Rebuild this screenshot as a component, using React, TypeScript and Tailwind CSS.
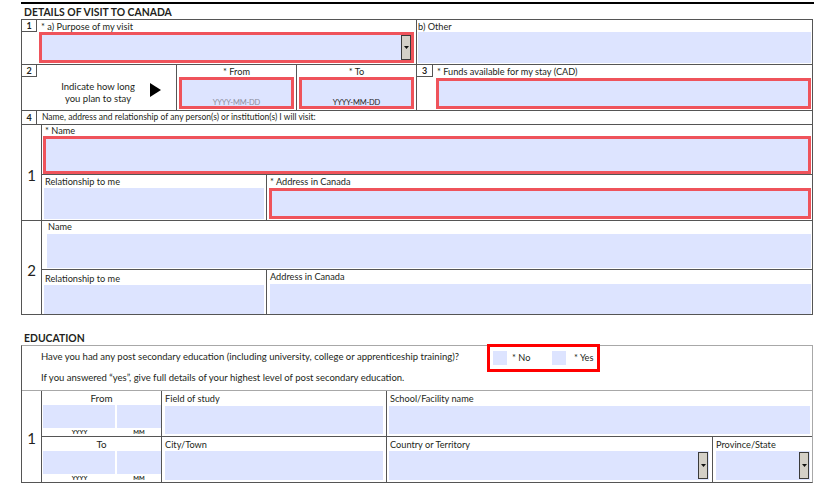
import React from 'react';

// PDF-style form fields
function Field({ red, className = '', children }: { red?: boolean; className?: string; children?: React.ReactNode }) {
  return (
    <div className={`bg-[#dde4ff] ${red ? 'border-[3px] border-[#ef535b]' : ''} ${className}`}>{children}</div>
  );
}

function DropButton() {
  return (
    <div className="w-[10px] h-full bg-[#d4d0c8] border border-[#3a3a3a] flex items-center justify-center">
      <svg width="5" height="3" viewBox="0 0 5 3">
        <polygon points="0,0 5,0 2.5,3" fill="#111" />
      </svg>
    </div>
  );
}

function NumBox({ n, w = 'w-[15px]' }: { n: string; w?: string }) {
  return (
    <div className={`${w} h-[12px] border-r border-b border-[#555] text-[9px] font-bold leading-[12px] text-center shrink-0`}>
      {n}
    </div>
  );
}

function DateStack({ label }: { label: string }) {
  return (
    <div className="w-[120px] border-r border-[#555] flex flex-col shrink-0">
      <div className="h-[14px] leading-[14px] text-center text-[9.8px]">{label}</div>
      <div className="flex h-[23px] pl-[1px] gap-[2px]">
        <Field className="w-[72px]" />
        <Field className="flex-1" />
      </div>
      <div className="flex h-[8px] text-[6px] font-bold leading-[8px]">
        <div className="w-[75px] text-center">YYYY</div>
        <div className="flex-1 text-center">MM</div>
      </div>
    </div>
  );
}

export default function App() {
  return (
    <div className="w-[832px] h-[492px] bg-white overflow-hidden text-[#231f20] font-['Lato',sans-serif] text-[9.2px] pl-[21px]">
      <div className="mt-[2px] w-[793px] h-[2px] bg-black" />
      <div className="h-[15px] leading-[16px] pl-[3px] text-[10.4px] font-bold">DETAILS OF VISIT TO CANADA</div>

      {/* Details of visit table */}
      <div className="w-[792px] border border-[#555]">
        {/* Row 1 */}
        <div className="flex h-[45px] border-b border-[#555]">
          <div className="w-[395px] border-r border-[#555] flex">
            <div className="w-[15px]">
              <NumBox n="1" />
            </div>
            <div className="flex-1 flex flex-col">
              <div className="h-[12px] leading-[13px] pl-[4px]">* a) Purpose of my visit</div>
              <Field red className="h-[31px] ml-[2px] mr-[2px] flex justify-end">
                <DropButton />
              </Field>
            </div>
          </div>
          <div className="flex-1 flex flex-col">
            <div className="h-[12px] leading-[13px] pl-[1px]">b) Other</div>
            <Field className="h-[31px] ml-[1px] mr-[1px]" />
          </div>
        </div>

        {/* Row 2 */}
        <div className="flex h-[46px] border-b border-[#555]">
          <div className="w-[155px] border-r border-[#555] flex flex-col">
            <NumBox n="2" />
            <div className="flex items-start mt-[4px] ml-[24px]">
              <div className="w-[104px] text-center text-[9.5px] leading-[12px]">
                Indicate how long
                <br />
                you plan to stay
              </div>
              <svg width="11" height="14" viewBox="0 0 11 14" className="mt-[2px]">
                <polygon points="0,0 11,7 0,14" fill="#000" />
              </svg>
            </div>
          </div>
          <div className="w-[120px] border-r border-[#555] flex flex-col">
            <div className="h-[12px] leading-[13px] text-center">* From</div>
            <Field red className="h-[32px] mx-[2px] flex items-end justify-center">
              <span className="text-[7.5px] leading-none text-[#8b8d9c] tracking-tight">YYYY-MM-DD</span>
            </Field>
          </div>
          <div className="w-[120px] border-r border-[#555] flex flex-col">
            <div className="h-[12px] leading-[13px] text-center">* To</div>
            <Field red className="h-[32px] mx-[2px] flex items-end justify-center">
              <span className="text-[7.5px] leading-none text-[#222] tracking-tight">YYYY-MM-DD</span>
            </Field>
          </div>
          <div className="flex-1 flex">
            <div className="w-[16px]">
              <NumBox n="3" w="w-[16px]" />
            </div>
            <div className="flex-1 flex flex-col">
              <div className="h-[13px] leading-[13px] pl-[4px]">* Funds available for my stay (CAD)</div>
              <Field red className="h-[31px] ml-[3px] mr-[1px]" />
            </div>
          </div>
        </div>

        {/* Row 4 header */}
        <div className="flex h-[14px] border-b border-[#555]">
          <div className="w-[15px] border-r border-[#555] text-[9px] font-bold leading-[13px] text-center">4</div>
          <div className="pl-[5px] leading-[13px] text-[8.5px]">
            Name, address and relationship of any person(s) or institution(s) I will visit:
          </div>
        </div>

        {/* Person 1 */}
        <div className="flex h-[96px] border-b border-[#555]">
          <div className="w-[20px] border-r border-[#555] flex items-center justify-center text-[15px] pt-[6px]">1</div>
          <div className="flex-1 flex flex-col">
            <div className="h-[50px] border-b border-[#555] flex flex-col">
              <div className="h-[11px] leading-[11px] pl-[3px]">* Name</div>
              <Field red className="h-[38px] mx-[1px]" />
            </div>
            <div className="flex flex-1">
              <div className="w-[225px] border-r border-[#555] flex flex-col">
                <div className="h-[13px] leading-[13px] pl-[3px]">Relationship to me</div>
                <Field className="h-[31px] mx-[2px]" />
              </div>
              <div className="flex-1 flex flex-col">
                <div className="h-[13px] leading-[13px] pl-[3px]">* Address in Canada</div>
                <Field red className="h-[31px] ml-[2px] mr-[1px]" />
              </div>
            </div>
          </div>
        </div>

        {/* Person 2 */}
        <div className="flex h-[93px]">
          <div className="w-[20px] border-r border-[#555] flex items-center justify-center text-[15px] pt-[6px]">2</div>
          <div className="flex-1 flex flex-col">
            <div className="h-[49px] border-b border-[#555] flex flex-col">
              <div className="h-[13px] leading-[11px] pl-[6px]">Name</div>
              <Field className="h-[34px] ml-[5px] mr-[1px]" />
            </div>
            <div className="flex flex-1">
              <div className="w-[225px] border-r border-[#555] flex flex-col">
                <div className="h-[15px] leading-[17px] pl-[3px]">Relationship to me</div>
                <Field className="h-[29px] mx-[2px]" />
              </div>
              <div className="flex-1 flex flex-col">
                <div className="h-[14px] leading-[13px] pl-[3px]">Address in Canada</div>
                <Field className="h-[30px] ml-[3px] mr-[1px]" />
              </div>
            </div>
          </div>
        </div>
      </div>

      <div className="mt-[15px] h-[15px] leading-[16px] pl-[3px] text-[10.4px] font-bold">EDUCATION</div>

      {/* Education table */}
      <div className="w-[792px] border border-[#a8a8a8] border-l-[#555] border-b-[#555]">
        <div className="relative h-[45px] border-b border-[#a8a8a8] pl-[19px] text-[9.5px]">
          <div className="pt-[4px] leading-[13px]">
            Have you had any post secondary education (including university, college or apprenticeship training)?
          </div>
          <div className="mt-[8px] leading-[13px]">
            If you answered “yes”, give full details of your highest level of post secondary education.
          </div>
          <div className="absolute left-[465px] top-[-2px] w-[113px] h-[28px] border-[3px] border-[#ff0000] flex items-center pl-[3px] text-[9.2px]">
            <div className="w-[59px] flex items-center">
              <div className="w-[14px] h-[14px] bg-[#dde4ff]" />
              <span className="ml-[5px]">* No</span>
            </div>
            <div className="w-[14px] h-[14px] bg-[#dde4ff]" />
            <span className="ml-[8px]">* Yes</span>
          </div>
        </div>

        <div className="flex h-[91px]">
          <div className="w-[20px] border-r border-[#555] flex items-center justify-center text-[15px] pt-[3px]">1</div>
          <div className="flex-1 flex flex-col">
            <div className="flex h-[46px] border-b border-[#555]">
              <DateStack label="From" />
              <div className="w-[225px] border-r border-[#555] flex flex-col">
                <div className="h-[15px] leading-[16px] pl-[3px]">Field of study</div>
                <Field className="h-[28px] mx-[3px]" />
              </div>
              <div className="flex-1 flex flex-col">
                <div className="h-[15px] leading-[16px] pl-[3px]">School/Facility name</div>
                <Field className="h-[28px] mx-[2px]" />
              </div>
            </div>
            <div className="flex flex-1">
              <DateStack label="To" />
              <div className="w-[225px] border-r border-[#555] flex flex-col">
                <div className="h-[14px] leading-[15px] pl-[3px]">City/Town</div>
                <Field className="h-[29px] mx-[3px]" />
              </div>
              <div className="w-[326px] border-r border-[#555] flex flex-col">
                <div className="h-[14px] leading-[15px] pl-[3px]">Country or Territory</div>
                <Field className="h-[29px] ml-[2px] mr-[3px] flex justify-end py-[1px] pr-[1px]">
                  <DropButton />
                </Field>
              </div>
              <div className="flex-1 flex flex-col">
                <div className="h-[14px] leading-[15px] pl-[3px]">Province/State</div>
                <Field className="h-[29px] ml-[3px] mr-[2px] flex justify-end py-[1px] pr-[1px]">
                  <DropButton />
                </Field>
              </div>
            </div>
          </div>
        </div>
      </div>
    </div>
  );
}
